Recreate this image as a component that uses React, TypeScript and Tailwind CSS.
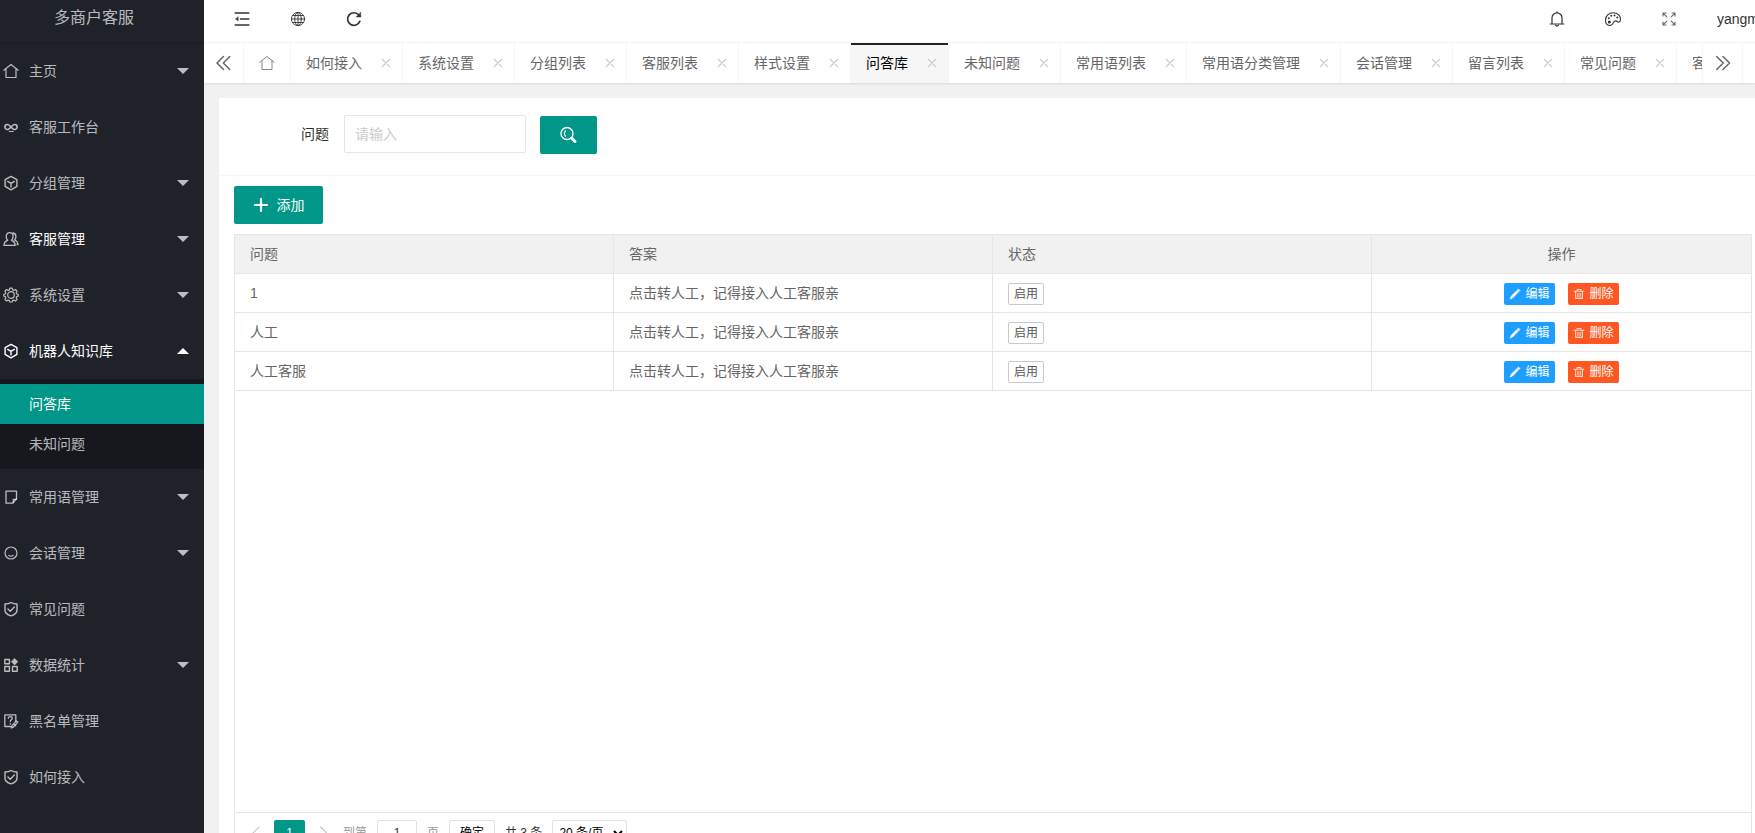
import { useState } from "react";
import type { ReactNode } from "react";

function Icon({ children, size = "size-4", width = 1 }: { children: ReactNode; size?: string; width?: number }) {
  return (
    <svg
      viewBox="0 0 16 16"
      className={`${size} shrink-0`}
      fill="none"
      stroke="currentColor"
      strokeWidth={width}
      strokeLinecap="round"
      strokeLinejoin="round"
      aria-hidden="true"
    >
      {children}
    </svg>
  );
}

const homeShape = <path d="M.8 7.200 8 1.500l7.200 5.700M3 5.800v8.700h10V5.800" />;

const cubeShape = (
  <>
    <path d="M8 1.400 13.900 4.700v6.700L8 14.800l-5.900-3.400V4.700z" />
    <path d="M4.700 6.400 8 8.300l3.300-1.900M8 8.300v3.600" />
  </>
);

const shieldShape = (
  <>
    <path d="M8 1.500c2 1.200 3.800 1.500 6 1.500v6.200c0 2.600-2.500 4.500-6 5.700-3.500-1.200-6-3.100-6-5.700V3c2.200 0 4-.3 6-1.500z" />
    <path d="m4.900 8 2.400 2.300L11.300 6" />
  </>
);

const icons: Record<string, ReactNode> = {
  home: <Icon width={1.2}>{homeShape}</Icon>,
  cube: <Icon width={1.4}>{cubeShape}</Icon>,
  shield: <Icon width={1.4}>{shieldShape}</Icon>,
  desk: (
    <Icon width={1.6}>
      <path d="M8 8C6.700 6.400 5.800 5.500 4.400 5.500a2.500 2.500 0 0 0 0 5C5.800 10.500 6.700 9.600 8 8s2.200-2.500 3.600-2.500a2.500 2.500 0 0 1 0 5C10.200 10.500 9.300 9.600 8 8z" />
      <path d="M6.200 12.500h4" strokeWidth="1" />
    </Icon>
  ),
  users: (
    <Icon width={1.3}>
      <path d="M1 14.400c0-3 1.200-4.300 3.700-5.100C3.600 8.300 3.200 7 3.200 5.500 3.200 3.200 4.500 1.700 6.600 1.700s3.500 1.500 3.500 3.800c0 1.500-.5 2.800-1.600 3.800 2.500.8 3.700 2.100 3.700 5.100z" />
      <path d="M10.200 2c1.700.3 2.700 1.600 2.700 3.600 0 1.400-.4 2.500-1.300 3.400 2.200.9 3.200 2.300 3.400 4.600h-1" />
    </Icon>
  ),
  gear: (
    <Icon width={1.2}>
      <circle cx="8" cy="8" r="3.300" />
      <path d="M6.800 1.200h2.400l.4 1.700 1.300.5 1.500-.9 1.700 1.700-.9 1.500.5 1.300 1.500.3v1.800l-1.500.4-.5 1.300.9 1.500-1.700 1.700-1.500-.9-1.300.5-.4 1.400H6.800l-.4-1.400-1.300-.5-1.500.9-1.700-1.700.9-1.500-.5-1.300-1.500-.4V7.300l1.500-.3.5-1.300-.9-1.500 1.700-1.700 1.500.9 1.300-.5z" />
    </Icon>
  ),
  note: (
    <Icon width={1.3}>
      <path d="M3 2.200h10.500v7.600L9.800 14.200H3z" />
      <path d="M13.500 10.300h-3.200v3.300" />
    </Icon>
  ),
  face: (
    <Icon width={1.2}>
      <circle cx="8" cy="8" r="6" />
      <path d="M5.800 10.400c1.200.7 3.200.7 4.400 0" />
    </Icon>
  ),
  stats: (
    <Icon width={1.4}>
      <path d="M1.800 2.500h4.600v4.300H1.800zM1.800 9.500h4.600v4.700H1.800zM9.500 9.500h4.700v4.700H9.500z" />
      <path d="m11.600 1.500 3.200 3.200-3.200 3.200-3.200-3.200z" fill="currentColor" strokeWidth=".5" />
    </Icon>
  ),
  blacklist: (
    <Icon width={1.3}>
      <path d="M7.500 13.500H1.800V1.800h11v6" />
      <path d="M5.300 5.300c0-2.200 4-2.200 4 0 0 1.500-2 1.300-2 3.200M7.300 10.600v.4" />
      <path d="m14.800 9-4.600 5.200-1.900.8.500-2.100 4.500-5zM10.800 11l2 1.700" />
    </Icon>
  ),
};

type MenuItem = { label: string; icon: string; group?: boolean; bright?: boolean; open?: boolean };

const menu: MenuItem[] = [
  { label: "主页", icon: "home", group: true },
  { label: "客服工作台", icon: "desk" },
  { label: "分组管理", icon: "cube", group: true },
  { label: "客服管理", icon: "users", group: true, bright: true },
  { label: "系统设置", icon: "gear", group: true },
  { label: "机器人知识库", icon: "cube", group: true, bright: true, open: true },
  { label: "常用语管理", icon: "note", group: true },
  { label: "会话管理", icon: "face", group: true },
  { label: "常见问题", icon: "shield" },
  { label: "数据统计", icon: "stats", group: true },
  { label: "黑名单管理", icon: "blacklist" },
  { label: "如何接入", icon: "shield" },
];

const tabs = [
  "如何接入",
  "系统设置",
  "分组列表",
  "客服列表",
  "样式设置",
  "问答库",
  "未知问题",
  "常用语列表",
  "常用语分类管理",
  "会话管理",
  "留言列表",
  "常见问题",
  "客服统计",
];

const rows = ["1", "人工", "人工客服"];

function Sidebar() {
  return (
    <aside className="w-[204px] shrink-0 overflow-hidden bg-[#20222a] text-white/70">
      <div className="flex h-[42px] items-center justify-center pr-4 pb-1.5 text-base shadow-[0_1px_2px_rgba(0,0,0,0.15)]">
        多商户客服
      </div>
      <nav className="pt-px">
        {menu.map((item) => (
          <div key={item.label}>
            <a
              href="#"
              className={`flex h-14 items-center gap-2.5 pr-[15px] pl-[3px] ${item.bright ? "text-white" : ""}`}
            >
              <span className={item.open ? "text-white" : "text-white/70"}>{icons[item.icon]}</span>
              <span className="flex-1">{item.label}</span>
              {item.group && (
                <svg
                  viewBox="0 0 12 6"
                  className={`h-1.5 w-3 ${item.open ? "text-white" : "text-white/70"}`}
                  fill="currentColor"
                  aria-hidden="true"
                >
                  <path d={item.open ? "M0 6h12L6 0z" : "M0 0h12L6 6z"} />
                </svg>
              )}
            </a>
            {item.open && (
              <div className="bg-[#16181d] py-[5px]">
                <a href="#" className="flex h-10 items-center bg-[#009688] pl-[29px] text-white">
                  问答库
                </a>
                <a href="#" className="flex h-10 items-center pl-[29px]">
                  未知问题
                </a>
              </div>
            )}
          </div>
        ))}
      </nav>
    </aside>
  );
}

function HeaderButton({ label, children }: { label: string; children: ReactNode }) {
  return (
    <button type="button" aria-label={label} className="flex w-14 items-center justify-center">
      {children}
    </button>
  );
}

function Header() {
  return (
    <header className="flex h-[43px] border-b border-[#f6f6f6] bg-white pb-1 pl-2.5 text-[#333]">
      <HeaderButton label="收起菜单">
        <Icon width={1.6}>
          <path d="M1.200 2h13.600M6.500 8h8.300M1.200 14h13.600" />
          <path d="M4.200 6v4L1.500 8z" fill="currentColor" strokeWidth=".4" />
        </Icon>
      </HeaderButton>
      <HeaderButton label="前台">
        <Icon width={0.9}>
          <circle cx="8" cy="8" r="6.600" />
          <ellipse cx="8" cy="8" rx="3.300" ry="6.600" />
          <path d="M8 1.400v13.200M1.400 8h13.200M2.500 4.500h11M2.500 11.500h11" />
        </Icon>
      </HeaderButton>
      <HeaderButton label="刷新">
        <Icon width={1.7}>
          <path d="M13.800 10.400A6.300 6.300 0 1 1 12.800 4L14 5.400" />
          <path d="M14.700 1.500v4.400h-4.400z" fill="currentColor" strokeWidth=".5" />
        </Icon>
      </HeaderButton>
      <div className="flex-1" />
      <HeaderButton label="消息">
        <Icon width={1.2}>
          <path d="M1.200 13h13.600M3 13V6.800a5 5 0 0 1 10 0V13M8 .9v.9M6.600 14.300c.5 1 2.300 1 2.800 0" />
        </Icon>
      </HeaderButton>
      <HeaderButton label="主题">
        <Icon width={1.1}>
          <path d="M3.700 14.300C1.500 13.600.5 11.500.5 9.200c0-4.200 3.300-7.400 7.700-7.400 4.200 0 7.300 2.800 7.300 6.200 0 1.800-.8 3.200-1.900 3.200-1.300 0-1.600-1.300-2.900-1.300-1.800 0-2.300 1.300-2.900 2.500-.8 1.500-2.200 2.500-4.100 1.900z" />
          <g fill="currentColor" stroke="none">
            <circle cx="4.300" cy="11" r="1.500" />
            <circle cx="3.800" cy="7.300" r="1" />
            <circle cx="6.200" cy="4.800" r="1" />
            <circle cx="9.500" cy="4.500" r="1" />
            <circle cx="12.300" cy="6.500" r="1" />
          </g>
        </Icon>
      </HeaderButton>
      <HeaderButton label="全屏">
        <span className="text-[#666]">
          <Icon width={1.1}>
            <path d="M2 5V2h3M11 2h3v3M2 11v3h3M14 11v3h-3M2.300 2.300l3.500 3.500M13.700 2.300l-3.500 3.500M2.300 13.700l3.500-3.500M13.700 13.700l-3.500-3.500" />
          </Icon>
        </span>
      </HeaderButton>
      <a href="#" className="flex w-[58px] items-center pl-5 whitespace-nowrap">
        yangm
      </a>
    </header>
  );
}

function TabBar() {
  return (
    <div className="relative flex h-10 bg-white text-[#666] shadow-[0_1px_2px_rgba(0,0,0,0.1)]">
      <button
        type="button"
        aria-label="向左"
        className="flex w-10 shrink-0 items-center justify-center border-r border-[#f6f6f6]"
      >
        <Icon width={1.5}>
          <path d="M7.500 1.500 1 8l6.500 6.500M13.800 1.500 7.300 8l6.500 6.500" />
        </Icon>
      </button>
      <div className="flex min-w-0 flex-1 overflow-hidden">
        <a
          href="#"
          aria-label="主页"
          className="flex w-[47px] shrink-0 items-center justify-center border-r border-[#f6f6f6] text-[#888]"
        >
          <Icon>{homeShape}</Icon>
        </a>
        {tabs.map((tab) => {
          const active = tab === "问答库";
          return (
            <div
              key={tab}
              className={`relative flex shrink-0 items-center gap-2 border-r border-[#f6f6f6] pr-2 pl-[15px] ${
                active ? "bg-[#f6f6f6] text-black" : ""
              }`}
            >
              {active && <span className="absolute inset-x-0 top-0 h-0.5 bg-[#20222a]" />}
              <a href="#" className="pr-2 whitespace-nowrap">
                {tab}
              </a>
              <button
                type="button"
                aria-label={`关闭${tab}`}
                className="-ml-px flex h-4 w-[17px] items-center justify-end text-[#c8c8c8]"
              >
                <Icon width={1.2}>
                  <path d="m4.300 4.300 7.400 7.400M11.700 4.300l-7.400 7.400" />
                </Icon>
              </button>
            </div>
          );
        })}
      </div>
      <button
        type="button"
        aria-label="向右"
        className="mr-3 flex w-[41px] shrink-0 items-center justify-center border-x border-[#f6f6f6]"
      >
        <Icon width={1.5}>
          <path d="M1.700 1.500 8.200 8l-6.500 6.500M8 1.500 14.500 8 8 14.500" />
        </Icon>
      </button>
    </div>
  );
}

function SearchForm() {
  const [query, setQuery] = useState("");
  return (
    <form className="flex h-[78px] items-start border-b border-[#f6f6f6] pt-[17px]" onSubmit={(e) => e.preventDefault()}>
      <label htmlFor="question" className="w-[125px] pt-[9px] pr-[15px] text-right leading-5 text-[#333]">
        问题
      </label>
      <input
        id="question"
        value={query}
        onChange={(e) => setQuery(e.target.value)}
        placeholder="请输入"
        className="h-[38px] w-[182px] rounded-xs border border-[#e6e6e6] px-2.5 outline-none placeholder:text-[#ccc]"
      />
      <button
        type="submit"
        aria-label="搜索"
        className="mt-px ml-3.5 flex h-[38px] w-[57px] items-center justify-center rounded-xs bg-[#009688] text-white"
      >
        <svg viewBox="0 0 18 18" className="size-[18px]" fill="none" stroke="currentColor" strokeLinecap="round" aria-hidden="true">
          <circle cx="7" cy="7.500" r="6" strokeWidth="1.300" />
          <path d="M5.500 4.800c-1.300 1.600-1.300 3.800 0 5.400" strokeWidth="1.200" />
          <path d="m11.800 12.300 3.200 3.200" strokeWidth="3" />
        </svg>
      </button>
    </form>
  );
}

function DataTable() {
  return (
    <div className="border border-[#e6e6e6] text-[#666]">
      <div className="min-h-[calc(100vh-256px)]">
        <table className="w-full table-fixed border-separate border-spacing-0">
          <thead className="bg-[#f1f1f1]">
            <tr className="h-[39px] text-left">
              <th className="border-r border-b border-[#e6e6e6] px-[15px] font-normal">问题</th>
              <th className="border-r border-b border-[#e6e6e6] px-[15px] font-normal">答案</th>
              <th className="border-r border-b border-[#e6e6e6] px-[15px] font-normal">状态</th>
              <th className="border-b border-[#e6e6e6] px-[15px] text-center font-normal">操作</th>
            </tr>
          </thead>
          <tbody>
            {rows.map((question) => (
              <tr key={question} className="h-[39px]">
                <td className="border-r border-b border-[#e6e6e6] px-[15px]">{question}</td>
                <td className="border-r border-b border-[#e6e6e6] px-[15px]">点击转人工，记得接入人工客服亲</td>
                <td className="border-r border-b border-[#e6e6e6] px-[15px] pt-0.5">
                  <button
                    type="button"
                    className="flex h-[22px] items-center rounded-xs border border-[#c9c9c9] px-[5px] text-xs text-[#555]"
                  >
                    启用
                  </button>
                </td>
                <td className="border-b border-[#e6e6e6] px-[15px] pt-0.5">
                  <div className="flex justify-center gap-[13px] text-xs text-white">
                    <button type="button" className="flex h-[22px] w-[51px] items-center justify-center gap-1 rounded-xs bg-[#1e9fff]">
                      <Icon size="size-3">
                        <path d="m1.800 14.200 1.200-3.200 7.500-7.500 1.900 1.900L5 13zM11.500 2.500l1.300-.9 1.600 1.600-1 1.200z" fill="currentColor" />
                      </Icon>
                      编辑
                    </button>
                    <button type="button" className="flex h-[22px] w-[51px] items-center justify-center gap-1 rounded-xs bg-[#ff5722]">
                      <span className="opacity-80">
                        <Icon size="size-3" width={1.5}>
                          <path d="M1.500 4.300h13M5.500 4V2h5v2M3.500 4.500v9.300h9V4.500M6.500 7v4.500M9.500 7v4.500" />
                        </Icon>
                      </span>
                      删除
                    </button>
                  </div>
                </td>
              </tr>
            ))}
          </tbody>
        </table>
      </div>
      <Pager />
    </div>
  );
}

function Pager() {
  return (
    <div className="flex h-[41px] items-start border-t border-[#e6e6e6] pt-[7px] pl-2 text-xs text-[#333]">
      <button type="button" aria-label="上一页" className="flex h-[26px] w-[31px] items-center pl-1.5 text-[#c8c8c8]">
        <Icon width={1.2}>
          <path d="M10 2 3.500 8.500 10 15" />
        </Icon>
      </button>
      <button type="button" className="h-[26px] w-[31px] rounded-xs bg-[#009688] text-white">
        1
      </button>
      <button type="button" aria-label="下一页" className="flex h-[26px] w-[38px] items-center justify-center text-[#c8c8c8]">
        <Icon width={1.2}>
          <path d="M4.500 2 11 8.500 4.500 15" />
        </Icon>
      </button>
      <label className="flex items-center gap-2.5 leading-[26px] text-[#999]">
        到第
        <input
          defaultValue="1"
          className="h-[26px] w-10 rounded-xs border border-[#e2e2e2] text-center text-[#333]"
        />
        页
      </label>
      <button type="button" className="ml-2.5 h-[26px] w-[46px] rounded-xs border border-[#e2e2e2] text-black">
        确定
      </button>
      <span className="ml-2.5 leading-[26px]">共 3 条</span>
      <select
        aria-label="每页条数"
        className="ml-2.5 h-[26px] w-[75px] rounded-xs border border-[#e2e2e2] bg-white pl-0.5 text-black"
      >
        <option>20 条/页</option>
      </select>
    </div>
  );
}

export default function App() {
  return (
    <div className="flex h-screen overflow-hidden bg-[#f1f1f1] font-['Liberation_Sans','Noto_Sans_CJK_SC',sans-serif] text-sm">
      <Sidebar />
      <div className="min-w-0 flex-1 overflow-hidden">
        <Header />
        <TabBar />
        <main className="mt-[15px] ml-[15px] rounded-tl-xs bg-white">
          <SearchForm />
          <div className="pt-2.5 pr-[3px] pl-[15px]">
            <button
              type="button"
              className="mb-2.5 flex h-[38px] w-[89px] items-center justify-center gap-2 rounded-xs bg-[#009688] text-white"
            >
              <Icon width={2.2}>
                <path d="M8 2v12M2 8h12" />
              </Icon>
              添加
            </button>
            <DataTable />
          </div>
        </main>
      </div>
    </div>
  );
}
